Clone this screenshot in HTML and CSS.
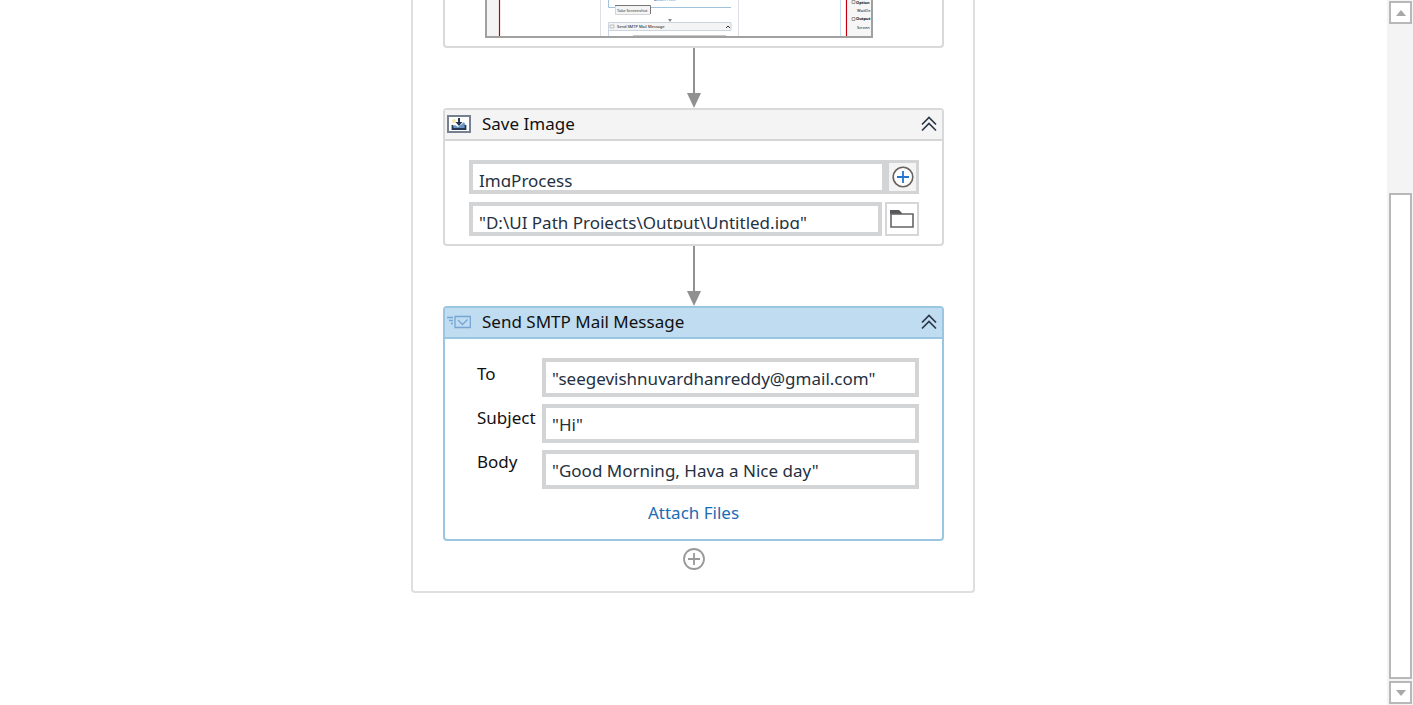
FILE: index.html
```html
<!DOCTYPE html>
<html lang="en">
<head>
<meta charset="utf-8">
<title>Workflow designer</title>
<link rel="stylesheet" href="styles.css">
</head>
<body>
<div class="designer">
  <main class="canvas">
    <section class="sequence">
      <article class="activity activity-open">
        <div class="preview">
          <svg class="preview-art" viewBox="0 0 384 36" role="img" aria-label="Informative screenshot">
            <rect width="384" height="36" fill="#fff"/>
            <rect width="12" height="36" fill="#f4f4f4"/>
            <path d="M12.500 0V36M359.500 0V36" stroke="#c00010" stroke-width="1.200"/>
            <path d="M113.500 0V36M251.500 0V36" stroke="#dcdfe4"/>
            <path d="M353.500 0V36" stroke="#c9e0ee"/>
            <path d="M121.500 0V7.500H244" stroke="#9fc3dd" fill="none"/>
            <text x="167" y="1" class="tiny tiny-link">Attach Files</text>
            <rect x="128" y="5" width="35" height="9" fill="#f4f4f4"/>
            <path d="M128 5.500H163.500V14" stroke="#777" fill="none"/>
            <path d="M128.500 6V14.500H163" stroke="#d5d5d5" fill="none"/>
            <text x="130" y="12" class="tiny">Take Screenshot</text>
            <path d="M181 19h4l-2 3z" fill="#888"/>
            <path d="M121.500 36V22.500H244V30.500H122" fill="#f4f4f4" stroke="#cbd5df"/>
            <path d="M123 25h4v3h-4z" fill="none" stroke="#aaa" stroke-width=".700"/>
            <text x="130" y="28" class="tiny tiny-strong">Send SMTP Mail Message</text>
            <path d="M239 28l2-2 2 2" fill="none" stroke="#333"/>
            <path d="M146 35.500H239" stroke="#c8c8c8"/>
            <rect x="361" width="23" height="36" fill="#f6f6f6"/>
            <path d="M365 .500h3v3h-3zM365 17.500h3v3h-3z" fill="none" stroke="#777" stroke-width=".700"/>
            <text x="369" y="4" class="tiny tiny-bold">Option</text>
            <text x="370" y="12" class="tiny tiny-strong">WaitDe</text>
            <text x="369" y="20" class="tiny tiny-bold">Output</text>
            <text x="370" y="29" class="tiny tiny-strong">Screen</text>
          </svg>
        </div>
      </article>

      <svg class="connector" viewBox="0 0 16 60" aria-hidden="true"><path d="M8 0V46" stroke="#919191" stroke-width="2"/><path d="M1 45H15L8 60z" fill="#919191"/></svg>

      <article class="activity">
        <header class="activity-head">
          <svg class="head-icon" viewBox="0 0 24 18" aria-hidden="true">
            <rect x="1" y="1" width="22" height="16" fill="#fff" stroke="#76808e" stroke-width="2"/>
            <circle cx="7" cy="6" r="2" fill="#f3e7a4"/>
            <path d="M5 15V12L8 10L11 12L15 9L17 7L19 11V15z" fill="#6996c6"/>
            <path d="M5.500 10V14H18.500V10" fill="none" stroke="#263752" stroke-width="1.800"/>
            <path d="M12 3V8" stroke="#263752" stroke-width="2"/><path d="M8.500 7H15.500L12 11z" fill="#263752"/>
          </svg>
          <h2 class="activity-title">Save Image</h2>
          <button class="collapse" type="button" aria-label="Collapse Save Image"><svg viewBox="0 0 16 16" aria-hidden="true"><path d="M1 8.500L8 1.500L15 8.500M1 14.500L8 7.500L15 14.500"/></svg></button>
        </header>
        <div class="save-body">
          <div class="save-row">
            <div class="box box-short"><div class="clip"><input class="entry" type="text" value="ImgProcess" aria-label="Image"></div></div>
            <button class="tool tool-add" type="button" aria-label="Create variable"><svg viewBox="0 0 22 22" aria-hidden="true"><circle cx="11" cy="11" r="9.800" fill="#fff" stroke="#69635f" stroke-width="1.600"/><path d="M11 5V17M5 11H17" stroke="#2374cf" stroke-width="1.800"/></svg></button>
          </div>
          <div class="save-row save-row-path">
            <div class="box box-short"><div class="clip"><input class="entry" type="text" value="&quot;D:\UI Path Projects\Output\Untitled.jpg&quot;" aria-label="File name"></div></div>
            <button class="tool tool-browse" type="button" aria-label="Browse"><svg class="folder" viewBox="0 0 24 18" aria-hidden="true"><path d="M0 0H9L12 3V4H0z" fill="#58585a"/><path d="M1 17V4H23V17z" fill="none" stroke="#666464" stroke-width="1.600"/></svg></button>
          </div>
        </div>
      </article>

      <svg class="connector" viewBox="0 0 16 60" aria-hidden="true"><path d="M8 0V46" stroke="#919191" stroke-width="2"/><path d="M1 45H15L8 60z" fill="#919191"/></svg>

      <article class="activity activity-selected">
        <header class="activity-head">
          <svg class="head-icon" viewBox="0 0 24 18" aria-hidden="true"><path d="M8 3.500H23.300V14.500H8zM11 7L15.500 11.500L20.500 6.500M0 4.500H6M2 7.500H6M4 10.500H6" fill="none" stroke="#76a5d3" stroke-width="1.300"/></svg>
          <h2 class="activity-title">Send SMTP Mail Message</h2>
          <button class="collapse" type="button" aria-label="Collapse Send SMTP Mail Message"><svg viewBox="0 0 16 16" aria-hidden="true"><path d="M1 8.500L8 1.500L15 8.500M1 14.500L8 7.500L15 14.500"/></svg></button>
        </header>
        <div class="mail-body">
          <div class="mail-form">
            <div class="labels">
              <label for="to">To</label>
              <label for="subject">Subject</label>
              <label for="body">Body</label>
            </div>
            <div class="fields">
              <div class="box"><input class="entry" id="to" type="text" value="&quot;seegevishnuvardhanreddy@gmail.com&quot;"></div>
              <div class="box"><input class="entry" id="subject" type="text" value="&quot;Hi&quot;"></div>
              <div class="box"><input class="entry" id="body" type="text" value="&quot;Good Morning, Hava a Nice day&quot;"></div>
            </div>
          </div>
          <a class="attach" href="#">Attach Files</a>
        </div>
      </article>

      <button class="add-activity" type="button" aria-label="Add activity"><svg viewBox="0 0 22 22" aria-hidden="true"><circle cx="11" cy="11" r="10" fill="none" stroke="#999" stroke-width="1.800"/><path d="M11 5V17M5 11H17" stroke="#999" stroke-width="1.800"/></svg></button>
    </section>
  </main>

  <aside class="scroll">
    <button class="scroll-button" type="button" aria-label="Scroll up"><svg viewBox="0 0 10 6" aria-hidden="true"><path d="M0 6L5 0L10 6z"/></svg></button>
    <div class="scroll-track"><div class="scroll-thumb"></div></div>
    <button class="scroll-button" type="button" aria-label="Scroll down"><svg viewBox="0 0 10 6" aria-hidden="true"><path d="M0 0L5 6L10 0z"/></svg></button>
  </aside>
</div>
</body>
</html>
```
FILE: styles.css
```css
* { box-sizing: border-box; }
body {
  margin: 0;
  background: #fff;
  color: #111;
  font: 17px/24px "Noto Sans", "Open Sans", sans-serif;
}
button { padding: 0; border: 0; background: none; font: inherit; }
svg { display: block; }
.designer { display: flex; height: 100vh; overflow: hidden; }
.canvas { flex: 1; min-width: 0; padding-right: 1px; }
.sequence {
  display: flex;
  flex-direction: column;
  align-items: center;
  max-width: 564px;
  margin: 0 auto;
  padding: 0 29px 21px 30px;
  border: 2px solid #dfdfdf;
  border-top: 0;
  border-radius: 0 0 4px 4px;
}
.activity {
  width: 100%;
  border: 2px solid #d8d9db;
  border-radius: 4px;
  background: #fff;
}
.activity-open {
  padding: 0 40px 8px;
  border-top: 0;
  border-radius: 0 0 4px 4px;
}
.preview { max-width: 388px; border: 2px solid #a0a0a0; border-top: 0; }
.preview-art { width: 100%; }
.tiny { font: 4px "Noto Sans", sans-serif; fill: #333; }
.tiny-link { fill: #4d7ba8; }
.tiny-strong { fill: #111; }
.tiny-bold { font-weight: 700; fill: #111; }
.connector { width: 16px; height: 60px; }
.activity-head {
  display: flex;
  align-items: center;
  height: 31px;
  padding: 0 5px 1px 2px;
  border-bottom: 2px solid #d5d6d8;
  background: #f4f4f4;
}
.head-icon { width: 24px; height: 18px; }
.activity-title { flex: 1; margin: 0 0 0 11px; font-size: 17px; font-weight: 400; }
.collapse svg { width: 16px; height: 16px; fill: none; stroke: #2b3748; stroke-width: 1.7; }
.save-body {
  display: flex;
  flex-direction: column;
  gap: 8px;
  padding: 19px 23px 8px 24px;
}
.save-row { display: flex; }
.save-row-path { gap: 3px; }
.box {
  flex: 1;
  min-width: 0;
  height: 39px;
  border: 4px solid #d3d4d6;
  background: #fff;
}
.box-short { flex: 1; height: 34px; }
.clip { height: 23px; overflow: hidden; }
.entry {
  display: block;
  width: 100%;
  height: 31px;
  padding: 2px 6px 0;
  border: 0;
  outline: 0;
  background: transparent;
  color: #25313f;
  font: inherit;
}
.clip .entry { padding-top: 2px; }
.tool { display: grid; place-items: center; height: 34px; }
.tool-add { width: 33px; border: 3px solid #d3d4d6; background: #f4f4f4; }
.tool-add svg { width: 22px; height: 22px; }
.tool-browse { width: 34px; border: 2px solid #d5d6d8; background: #fff; }
.folder { width: 24px; height: 18px; }
.activity-selected { border-color: #9ac6e2; }
.activity-selected .activity-head { border-color: #9ac6e2; background: #c0dcf0; }
.mail-body { padding: 19px 23px 14px; }
.mail-form { display: flex; padding-left: 9px; }
.labels {
  display: flex;
  flex-direction: column;
  gap: 20px;
  width: 65px;
  padding-top: 4px;
}
.fields { display: flex; flex: 1; flex-direction: column; gap: 7px; min-width: 0; }
.fields .box { flex: none; }
.attach {
  display: block;
  width: max-content;
  margin: 12px auto 0;
  color: #1b6cb5;
  text-decoration: none;
}
.add-activity { margin-top: 7px; }
.add-activity svg { width: 22px; height: 22px; }
.scroll {
  display: flex;
  flex-direction: column;
  gap: 2px;
  width: 26px;
  padding: 1px 1px 1px 2px;
  background: #f4f4f4;
}
.scroll-button {
  display: grid;
  place-items: center;
  height: 23px;
  border: 2px solid #b8b8b8;
  background: #fff;
}
.scroll-button svg { width: 10px; height: 6px; fill: #a8a8a8; }
.scroll-track { display: flex; flex: 1; flex-direction: column; justify-content: flex-end; }
.scroll-thumb { height: 74.5%; border: 2px solid #b8b8b8; background: #fff; }
```
